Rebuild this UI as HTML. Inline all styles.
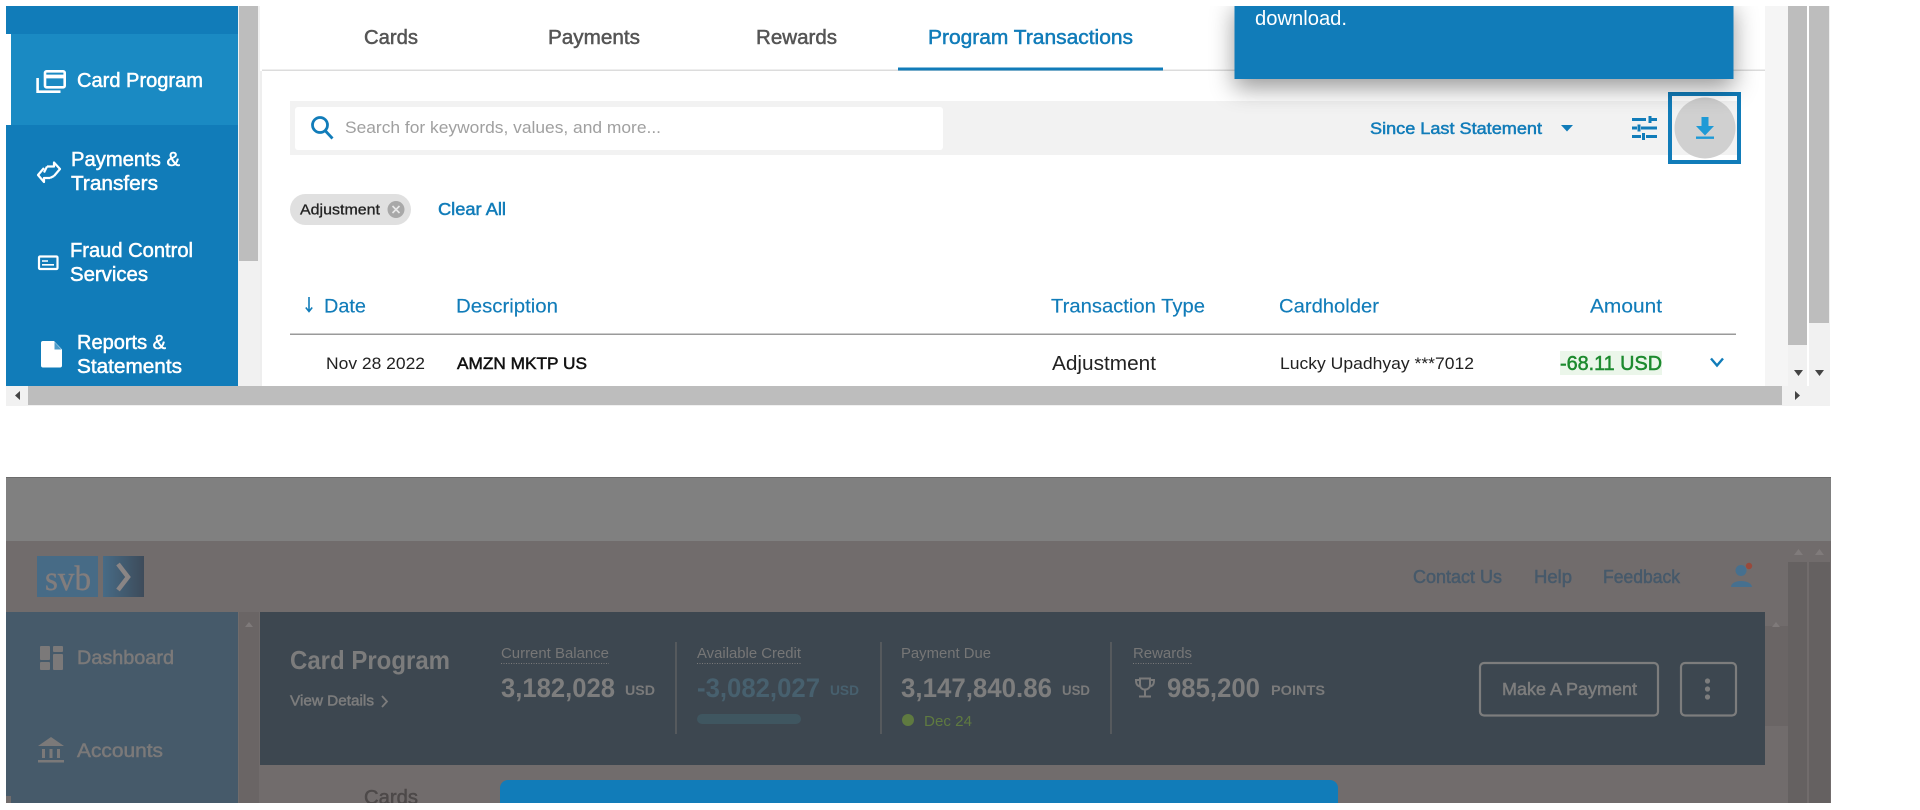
<!DOCTYPE html>
<html lang="en"><head><meta charset="utf-8"><title>Card Program</title>
<style>
html,body{margin:0;padding:0;background:#fff;width:1920px;height:810px;overflow:hidden}
svg{display:block;font-family:"Liberation Sans",sans-serif;filter:blur(.35px)}
.m{stroke-width:.5;paint-order:stroke}
</style></head><body>
<svg width="1920" height="810" viewBox="0 0 1920 810" xmlns="http://www.w3.org/2000/svg">
<rect width="1920" height="810" fill="#fff"/>

<!-- TOP PANEL -->
<rect x="6" y="6" width="1824" height="400" fill="#fff"/>
<rect x="6" y="6" width="232" height="380" fill="#117cb9"/>
<rect x="6" y="34" width="5" height="91" fill="#fff"/>
<rect x="11" y="34" width="227" height="91" fill="#1a8ac3"/>
<rect x="238" y="6" width="22" height="380" fill="#f1f1f1"/>
<rect x="239" y="6" width="19" height="255" fill="#bdbdbd"/>
<rect x="260" y="71" width="2" height="315" fill="#eeeeee"/>
<rect x="1765" y="6" width="23" height="380" fill="#f5f5f5"/>
<rect x="1788" y="6" width="42" height="380" fill="#f1f1f1"/>
<rect x="1788" y="6" width="19" height="339" fill="#bdbdbd"/>
<rect x="1809" y="6" width="20" height="317" fill="#bdbdbd"/>
<rect x="1807" y="6" width="2" height="380" fill="#fff"/>
<path d="M1794 370h9l-4.500 6zM1815 370h9l-4.500 6z" fill="#444"/>

<!-- sidebar icons + text -->
<g fill="none" stroke="#fff" stroke-width="2.600">
<rect x="45" y="71.300" width="19.700" height="16" rx="1.500"/>
<path d="M37.600 78v13.700h22.900"/>
<path d="M45 76.500h20" stroke-width="3.800"/>
<path d="M47 166.500h7v-4l6 6.500-6 7M50 178h-6v4l-6-7 6-7" stroke-width="2.200" stroke-linejoin="round"/>
<path d="M44 172.500l3-6M54 176l-4 2" stroke-width="2.200"/>
<rect x="39" y="256.500" width="18.500" height="12.500" rx="1" stroke-width="2.200"/>
<path d="M42 261h6M42 264.800h12" stroke-width="1.600"/>
</g>
<path d="M43 341h11l8 8.500v16a2 2 0 0 1-2 2H43a2 2 0 0 1-2-2v-22.500a2 2 0 0 1 2-2z" fill="#fff"/>
<path d="M54.500 342v7.500h7" fill="#117cb9" opacity=".75"/>
<g fill="#fff" stroke="#fff" class="m" font-size="20">
<text x="77" y="87" textLength="126" lengthAdjust="spacingAndGlyphs">Card Program</text>
<text x="71" y="166" textLength="109" lengthAdjust="spacingAndGlyphs">Payments &amp;</text>
<text x="71" y="190" textLength="87" lengthAdjust="spacingAndGlyphs">Transfers</text>
<text x="70" y="257" textLength="123" lengthAdjust="spacingAndGlyphs">Fraud Control</text>
<text x="70" y="281" textLength="78" lengthAdjust="spacingAndGlyphs">Services</text>
<text x="77" y="349" textLength="89" lengthAdjust="spacingAndGlyphs">Reports &amp;</text>
<text x="77" y="373" textLength="105" lengthAdjust="spacingAndGlyphs">Statements</text>
</g>

<!-- tabs -->
<rect x="262" y="69.500" width="1503" height="1.500" fill="#dcdcdc"/>
<g font-size="20" fill="#555" stroke="#555" class="m">
<text x="364" y="44" textLength="54" lengthAdjust="spacingAndGlyphs">Cards</text>
<text x="548" y="44" textLength="92" lengthAdjust="spacingAndGlyphs">Payments</text>
<text x="756" y="44" textLength="81" lengthAdjust="spacingAndGlyphs">Rewards</text>
<text x="928" y="44" textLength="205" lengthAdjust="spacingAndGlyphs" fill="#117cb9" stroke="#117cb9">Program Transactions</text>
</g>
<rect x="898" y="67.500" width="265" height="3" fill="#117cb9"/>

<!-- toolbar -->
<rect x="290" y="101" width="1449" height="54" fill="#f2f2f2"/>
<rect x="295" y="107" width="648" height="43" rx="3" fill="#fff"/>
<g fill="none" stroke="#117cb9" stroke-width="2.800">
<circle cx="320" cy="125" r="7.500"/>
<path d="M325.500 131l7 7.500"/>
</g>
<text x="345" y="133" font-size="17" fill="#a0a0a0" textLength="316" lengthAdjust="spacingAndGlyphs">Search for keywords, values, and more...</text>
<text x="1370" y="134" font-size="17" fill="#117cb9" stroke="#117cb9" class="m" textLength="172" lengthAdjust="spacingAndGlyphs">Since Last Statement</text>
<path d="M1561 125h12l-6 6.500z" fill="#117cb9"/>
<g fill="none" stroke="#117cb9" stroke-width="3">
<path d="M1632 119.500h14M1651 119.500h6M1650 116v7M1632 128h5M1641 128h16M1639 124.500v7M1632 136.500h9M1646 136.500h11M1643.500 133v7"/>
</g>
<rect x="1670" y="94" width="69" height="68" fill="none" stroke="#117cb9" stroke-width="4"/>
<circle cx="1705" cy="128" r="30.500" fill="#d0d0d0"/>
<path d="M1701.500 117h7v9h5.500l-9 9.500-9-9.500h5.500z" fill="#1e9ad6"/>
<rect x="1696" y="136.500" width="18" height="2.400" fill="#1e9ad6"/>

<!-- chip / clear -->
<rect x="290" y="194" width="121" height="31" rx="15.500" fill="#e0e0e0"/>
<text x="300" y="214.500" font-size="15" fill="#222" stroke="#222" stroke-width=".3" textLength="80" lengthAdjust="spacingAndGlyphs">Adjustment</text>
<circle cx="396" cy="209.500" r="8.500" fill="#a8a8a8"/>
<path d="M392.500 206l7 7M399.500 206l-7 7" stroke="#e8e8e8" stroke-width="1.600"/>
<text x="438" y="215" font-size="17.500" fill="#117cb9" stroke="#117cb9" class="m" textLength="68" lengthAdjust="spacingAndGlyphs">Clear All</text>

<!-- table head -->
<path d="M309 297v14M305.800 307.500l3.200 4 3.200-4" fill="none" stroke="#117cb9" stroke-width="1.600"/>
<g font-size="19.500" fill="#117cb9" stroke="#117cb9" stroke-width=".15">
<text x="324" y="312.500" textLength="42" lengthAdjust="spacingAndGlyphs">Date</text>
<text x="456" y="312.500" textLength="102" lengthAdjust="spacingAndGlyphs">Description</text>
<text x="1051" y="312.500" textLength="154" lengthAdjust="spacingAndGlyphs">Transaction Type</text>
<text x="1279" y="312.500" textLength="100" lengthAdjust="spacingAndGlyphs">Cardholder</text>
<text x="1590" y="312.500" textLength="72" lengthAdjust="spacingAndGlyphs">Amount</text>
</g>
<rect x="290" y="333.500" width="1446" height="1.500" fill="#9a9a9a"/>

<!-- row -->
<text x="326" y="369" font-size="16.500" fill="#222" textLength="99" lengthAdjust="spacingAndGlyphs">Nov 28 2022</text>
<text x="457" y="369" font-size="16.500" fill="#111" stroke="#111" class="m" textLength="130" lengthAdjust="spacingAndGlyphs">AMZN MKTP US</text>
<text x="1052" y="370" font-size="20" fill="#222" textLength="104" lengthAdjust="spacingAndGlyphs">Adjustment</text>
<text x="1280" y="369" font-size="17" fill="#222" textLength="194" lengthAdjust="spacingAndGlyphs">Lucky Upadhyay ***7012</text>
<rect x="1560" y="351" width="102" height="24" fill="#ebf6ea"/>
<text x="1560" y="370" font-size="20" fill="#1c8a2e" stroke="#1c8a2e" class="m" textLength="102" lengthAdjust="spacingAndGlyphs">-68.11 USD</text>
<path d="M1711 358.500l6 7 6-7" fill="none" stroke="#117cb9" stroke-width="2.400"/>

<!-- tooltip -->
<rect x="1234.500" y="0" width="499" height="79" fill="#117cb9" style="filter:drop-shadow(0 9px 12px rgba(0,0,0,.4))"/>
<text x="1255" y="25" font-size="20" fill="#fff" textLength="92" lengthAdjust="spacingAndGlyphs">download.</text>
<rect x="0" y="0" width="1920" height="6" fill="#fff"/>
<rect x="0" y="0" width="6" height="406" fill="#fff"/>

<!-- horizontal scrollbar -->
<rect x="6" y="386" width="1824" height="20" fill="#f1f1f1"/>
<rect x="28" y="386" width="1754" height="19" fill="#bdbdbd"/>
<path d="M20 391v9l-5-4.500zM1795 391v9l5-4.500z" fill="#444"/>

<!-- BOTTOM PANEL -->
<rect x="6" y="477" width="1825" height="64" fill="#808080"/>
<rect x="6" y="541" width="1825" height="262" fill="#716c6c"/>
<rect x="6" y="477" width="1825" height="1" fill="#6c6c6c"/>
<defs><linearGradient id="g" x1="0" x2="1"><stop offset="0" stop-color="#476b86"/><stop offset="1" stop-color="#3d4b5a"/></linearGradient></defs>
<rect x="37" y="556" width="61" height="41" fill="#476b86"/>
<rect x="103" y="556" width="41" height="41" fill="url(#g)"/>
<text x="45" y="590" font-family="Liberation Serif,serif" font-size="35" fill="#827d7d" stroke="#827d7d" stroke-width=".4" textLength="46" lengthAdjust="spacingAndGlyphs">svb</text>
<path d="M118 564l10 13-10 13" fill="none" stroke="#8a8585" stroke-width="4.500"/>
<g font-size="18.500" fill="#46596a" stroke="#46596a" class="m">
<text x="1413" y="583" textLength="89" lengthAdjust="spacingAndGlyphs">Contact Us</text>
<text x="1534" y="583" textLength="38" lengthAdjust="spacingAndGlyphs">Help</text>
<text x="1603" y="583" textLength="77" lengthAdjust="spacingAndGlyphs">Feedback</text>
</g>
<circle cx="1741" cy="570.500" r="5.500" fill="#46708f"/>
<path d="M1731 587c0-8 20-8 21 0z" fill="#46708f"/>
<circle cx="1749" cy="566" r="3.200" fill="#994a3c"/>
<rect x="1788" y="562" width="19" height="241" fill="#656161"/>
<rect x="1809" y="562" width="21" height="241" fill="#656161"/>
<path d="M1794 555h9l-4.500-6zM1815 555h9l-4.500-6z" fill="#807b7b"/>

<!-- bottom sidebar -->
<rect x="6" y="612" width="232" height="191" fill="#465a6a"/>
<rect x="6" y="796" width="5" height="7" fill="#716c6c"/>
<rect x="239" y="612" width="20" height="191" fill="#6a6565"/>
<path d="M245 627h8l-4-5z" fill="#7f7a7a"/>
<g fill="#7b7979">
<rect x="40" y="646" width="10" height="14" rx="1"/>
<rect x="40" y="662" width="10" height="8" rx="1"/>
<rect x="53" y="646" width="10" height="6" rx="1"/>
<rect x="53" y="654" width="10" height="16" rx="1"/>
<path d="M38 746l13-9 13 9z"/>
<rect x="42" y="749" width="3" height="9"/><rect x="49.500" y="749" width="3" height="9"/><rect x="57" y="749" width="3" height="9"/>
<rect x="38" y="760" width="26" height="2.500"/>
</g>
<g font-size="19.500" fill="#7b7979" stroke="#7b7979" class="m">
<text x="77" y="664" textLength="97" lengthAdjust="spacingAndGlyphs">Dashboard</text>
<text x="77" y="757" textLength="86" lengthAdjust="spacingAndGlyphs">Accounts</text>
</g>

<!-- banner -->
<rect x="260" y="612" width="1505" height="153" fill="#3d4750"/>
<rect x="1765" y="612" width="23" height="14" fill="#716c6c"/>
<rect x="1765" y="626" width="23" height="100" fill="#6a6565"/>
<path d="M1772 627h8l-4-5z" fill="#7f7a7a"/>
<text x="290" y="669" font-size="26" font-weight="700" fill="#7c7c7c" textLength="160" lengthAdjust="spacingAndGlyphs">Card Program</text>
<text x="290" y="705.500" font-size="15" fill="#7c7c7c" stroke="#7c7c7c" class="m" textLength="84" lengthAdjust="spacingAndGlyphs">View Details</text>
<path d="M382 696l5 5.500-5 5.500" fill="none" stroke="#7c7c7c" stroke-width="1.800"/>

<g font-size="15" fill="#767676">
<text x="501" y="658" textLength="108" lengthAdjust="spacingAndGlyphs">Current Balance</text>
<text x="697" y="658" textLength="104" lengthAdjust="spacingAndGlyphs">Available Credit</text>
<text x="901" y="658" textLength="90" lengthAdjust="spacingAndGlyphs">Payment Due</text>
<text x="1133" y="658" textLength="59" lengthAdjust="spacingAndGlyphs">Rewards</text>
</g>
<g stroke="#7a7a7a" stroke-width="1" stroke-dasharray="1 1.500">
<path d="M501 663.500h108M697 663.500h104M1133 663.500h59"/>
</g>
<path d="M676 642v92M881 642v92M1111 642v92" stroke="#666" stroke-width="1.200"/>

<g font-size="27" font-weight="700" fill="#7d7d7d">
<text x="501" y="697" textLength="114" lengthAdjust="spacingAndGlyphs">3,182,028</text>
<text x="697" y="697" textLength="123" lengthAdjust="spacingAndGlyphs" fill="#47606e">-3,082,027</text>
<text x="901" y="697" textLength="151" lengthAdjust="spacingAndGlyphs">3,147,840.86</text>
<text x="1167" y="697" textLength="93" lengthAdjust="spacingAndGlyphs">985,200</text>
</g>
<g font-size="14" font-weight="700" fill="#7a7a7a">
<text x="625" y="695" textLength="30" lengthAdjust="spacingAndGlyphs">USD</text>
<text x="830" y="695" textLength="29" lengthAdjust="spacingAndGlyphs" fill="#47606e">USD</text>
<text x="1062" y="695" textLength="28" lengthAdjust="spacingAndGlyphs">USD</text>
<text x="1271" y="695" textLength="54" lengthAdjust="spacingAndGlyphs">POINTS</text>
</g>
<rect x="697" y="714" width="104" height="10" rx="5" fill="#3f5660"/>
<circle cx="908" cy="720" r="6" fill="#5f7a40"/>
<text x="924" y="726" font-size="15" fill="#5f7a40" textLength="48" lengthAdjust="spacingAndGlyphs">Dec 24</text>
<g fill="none" stroke="#7a7a7a" stroke-width="2">
<path d="M1140 678.500h10v6c0 3-2 5-5 5s-5-2-5-5zM1140 680h-4c0 4 1 6 4.500 6.500M1150 680h4c0 4-1 6-4.500 6.500M1145 689.500v6M1139 696.500h12"/>
</g>
<rect x="1480" y="663" width="178" height="52.500" rx="4" fill="none" stroke="#7d7d7d" stroke-width="2.200"/>
<text x="1502" y="695" font-size="17.500" fill="#7d7d7d" stroke="#7d7d7d" class="m" textLength="135" lengthAdjust="spacingAndGlyphs">Make A Payment</text>
<rect x="1681" y="663" width="55" height="52.500" rx="4" fill="none" stroke="#7d7d7d" stroke-width="2.200"/>
<g fill="#7d7d7d"><circle cx="1707.500" cy="681" r="2.600"/><circle cx="1707.500" cy="689" r="2.600"/><circle cx="1707.500" cy="697" r="2.600"/></g>

<!-- modal & tab behind -->
<text x="364" y="804" font-size="20" fill="#4d4949" stroke="#4d4949" class="m" textLength="54" lengthAdjust="spacingAndGlyphs">Cards</text>
<path d="M500 803v-15a8 8 0 0 1 8-8h822a8 8 0 0 1 8 8v15z" fill="#117cb9"/>
<rect x="0" y="803" width="1920" height="7" fill="#fff"/>
<rect x="1831" y="470" width="89" height="340" fill="#fff"/>
</svg>
</body></html>
